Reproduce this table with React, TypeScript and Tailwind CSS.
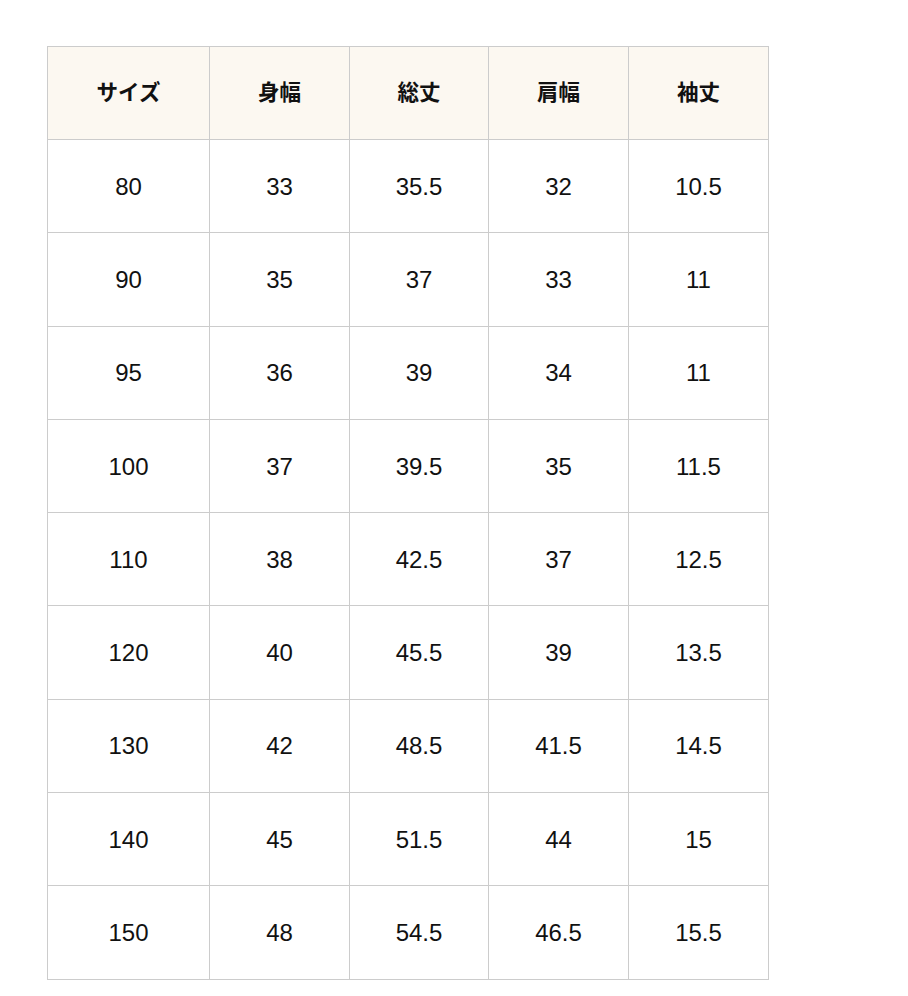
const headers = ["サイズ", "身幅", "総丈", "肩幅", "袖丈"];

const rows: string[][] = [
  ["80", "33", "35.5", "32", "10.5"],
  ["90", "35", "37", "33", "11"],
  ["95", "36", "39", "34", "11"],
  ["100", "37", "39.5", "35", "11.5"],
  ["110", "38", "42.5", "37", "12.5"],
  ["120", "40", "45.5", "39", "13.5"],
  ["130", "42", "48.5", "41.5", "14.5"],
  ["140", "45", "51.5", "44", "15"],
  ["150", "48", "54.5", "46.5", "15.5"],
];

const widths = ["w-[162px]", "w-[140px]", "w-[139px]", "w-[140px]", "w-[140px]"];

export default function App() {
  return (
    <div
      className="min-h-[996px] bg-white pl-[47px] pt-[46px] text-[#111]"
      style={{ fontFamily: '"Liberation Sans", "Noto Sans CJK JP", sans-serif' }}
    >
      <table className="w-[722px] table-fixed border-collapse">
        <thead>
          <tr className="h-[93px] bg-[#fcf8f1]">
            {headers.map((h, i) => (
              <th key={h} className={`${widths[i]} border border-[#cccccc] text-[21.5px] font-bold`}>
                {h}
              </th>
            ))}
          </tr>
        </thead>
        <tbody>
          {rows.map((r) => (
            <tr key={r[0]} className="h-[93.3px]">
              {r.map((c, i) => (
                <td key={i} className="border border-[#cccccc] pt-[1px] text-center text-[24px]">
                  {c}
                </td>
              ))}
            </tr>
          ))}
        </tbody>
      </table>
    </div>
  );
}
